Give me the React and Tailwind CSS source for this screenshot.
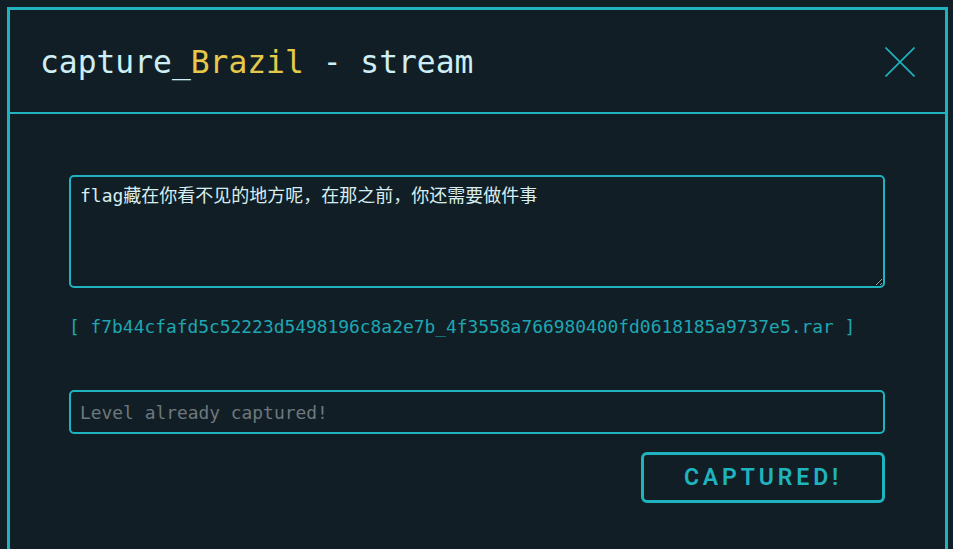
const mono = { fontFamily: '"DejaVu Sans Mono", "Noto Sans CJK SC", monospace' }

function CloseIcon() {
  return (
    <svg width="30" height="30" viewBox="0 0 30 30" fill="none" stroke="currentColor" strokeWidth="1.6">
      <path d="M0.5 0.5 L29.5 29.5 M29.5 0.5 L0.5 29.5" />
    </svg>
  )
}

export default function App() {
  return (
    <div className="min-h-screen bg-[#121e25] pt-[7px] pl-[7px] overflow-hidden">
      <div className="w-[941px] h-[560px] border-[3px] border-[#1fb3bf] bg-[#121e25]">
        <div className="h-[104px] border-b-2 border-[#1fb3bf] flex items-center justify-between pl-[30px] pr-[30px]">
          <h1 className="text-[31.3px] leading-none text-[#cdeef4] pt-[3px]" style={mono}>
            capture_<span className="text-[#e6c84a]">Brazil</span> - stream
          </h1>
          <button className="text-[#1fb3bf] mt-[2px]">
            <CloseIcon />
          </button>
        </div>

        <div className="pl-[59px] pr-[60px] pt-[61px] flex flex-col">
          <textarea
            readOnly
            defaultValue="flag藏在你看不见的地方呢，在那之前，你还需要做件事"
            className="w-full h-[113px] rounded-[5px] border-2 border-[#1fb3bf] bg-[#121e25] text-[#d6eef2] text-[18px] leading-[22px] px-[9px] pt-[8px] outline-none"
            style={mono}
          />
          <div className="mt-[28px] text-[17.9px] leading-[22px] text-[#1ea6b2]" style={mono}>
            [ f7b44cfafd5c52223d5498196c8a2e7b_4f3558a766980400fd0618185a9737e5.rar ]
          </div>
          <input
            readOnly
            placeholder="Level already captured!"
            className="mt-[52px] w-full h-[44px] rounded-[5px] border-2 border-[#1fb3bf] bg-[#121e25] px-[9px] text-[17.9px] text-[#d6eef2] placeholder:text-[#6c787d] outline-none"
            style={mono}
          />
          <div className="flex justify-end mt-[18px]">
            <button
              className="w-[244px] h-[51px] rounded-[6px] border-[3px] border-[#1fb3bf] text-[#1fb3bf] text-[23px] font-semibold tracking-[3.9px] pt-[2px]"
              style={{ fontFamily: 'Roboto, "Noto Sans", sans-serif' }}
            >
              CAPTURED!
            </button>
          </div>
        </div>
      </div>
    </div>
  )
}
